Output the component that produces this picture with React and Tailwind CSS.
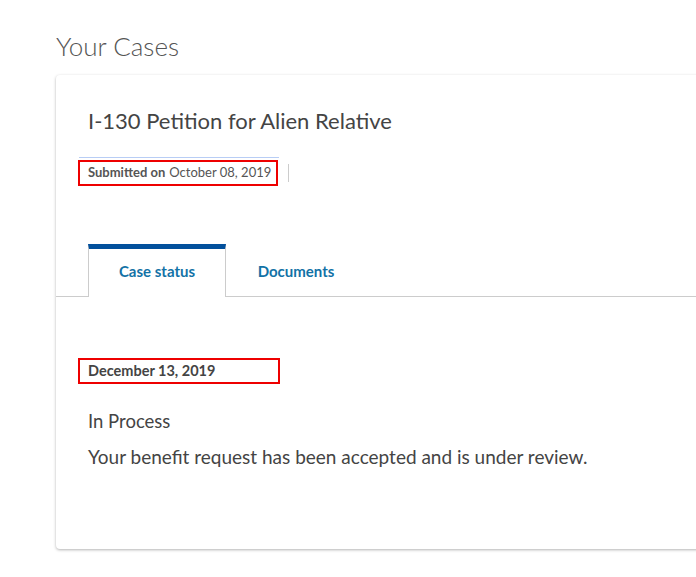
import React from "react";

const font = { fontFamily: "Lato, 'Open Sans', sans-serif" };

export default function App() {
  return (
    <div className="w-[696px] h-[577px] overflow-hidden bg-white" style={font}>
      <div className="pl-[56px] pt-[30px]">
        <h1 className="text-[26px] leading-[32px] font-light text-[#555]">Your Cases</h1>

        <div className="mt-[13px] w-[700px] h-[474px] rounded-[4px] bg-white shadow-[0_1px_3px_rgba(0,0,0,0.3)]">
          <div className="px-[32px] pt-[32px]">
            <h2 className="text-[22px] leading-[28px] text-[#444]">I-130 Petition for Alien Relative</h2>

            <div className="mt-[25px] flex items-center">
              <div className="relative -ml-[10px] w-[200px] h-[26px] border-2 border-[#e00] flex items-center pl-[8px] text-[13px] text-[#555]">
                <span className="absolute -top-[5px] -left-[1px] w-[200px] h-px bg-[#b8cdf5]" />
                <span className="font-bold mr-[4px]">Submitted on</span>
                <span>October 08, 2019</span>
              </div>
              <span className="ml-[10px] w-px h-[18px] bg-[#ccc]" />
            </div>
          </div>

          <div className="mt-[58px] flex border-b border-[#ccc] pl-[32px] h-[53px]">
            <div className="w-[138px] h-[53px] -mb-px border-t-[5px] border-t-[#02509c] border-x border-x-[#ccc] bg-white flex items-center justify-center pb-[3px] text-[15px] font-bold text-[#1272a6]">
              Case status
            </div>
            <div className="w-[140px] flex items-center justify-center text-[15px] font-bold text-[#1272a6] pt-[2px]">
              Documents
            </div>
          </div>

          <div className="px-[32px] pt-[61px]">
            <div className="-ml-[10px] w-[202px] h-[26px] border-2 border-[#e00] flex items-center pl-[8px] text-[14.5px] font-bold text-[#444]">
              December 13, 2019
            </div>
            <p className="mt-[24px] text-[18.5px] leading-[26px] text-[#444]">In Process</p>
            <p className="mt-[10px] text-[19px] leading-[26px] text-[#444]">
              Your benefit request has been accepted and is under review.
            </p>
          </div>
        </div>
      </div>
    </div>
  );
}
